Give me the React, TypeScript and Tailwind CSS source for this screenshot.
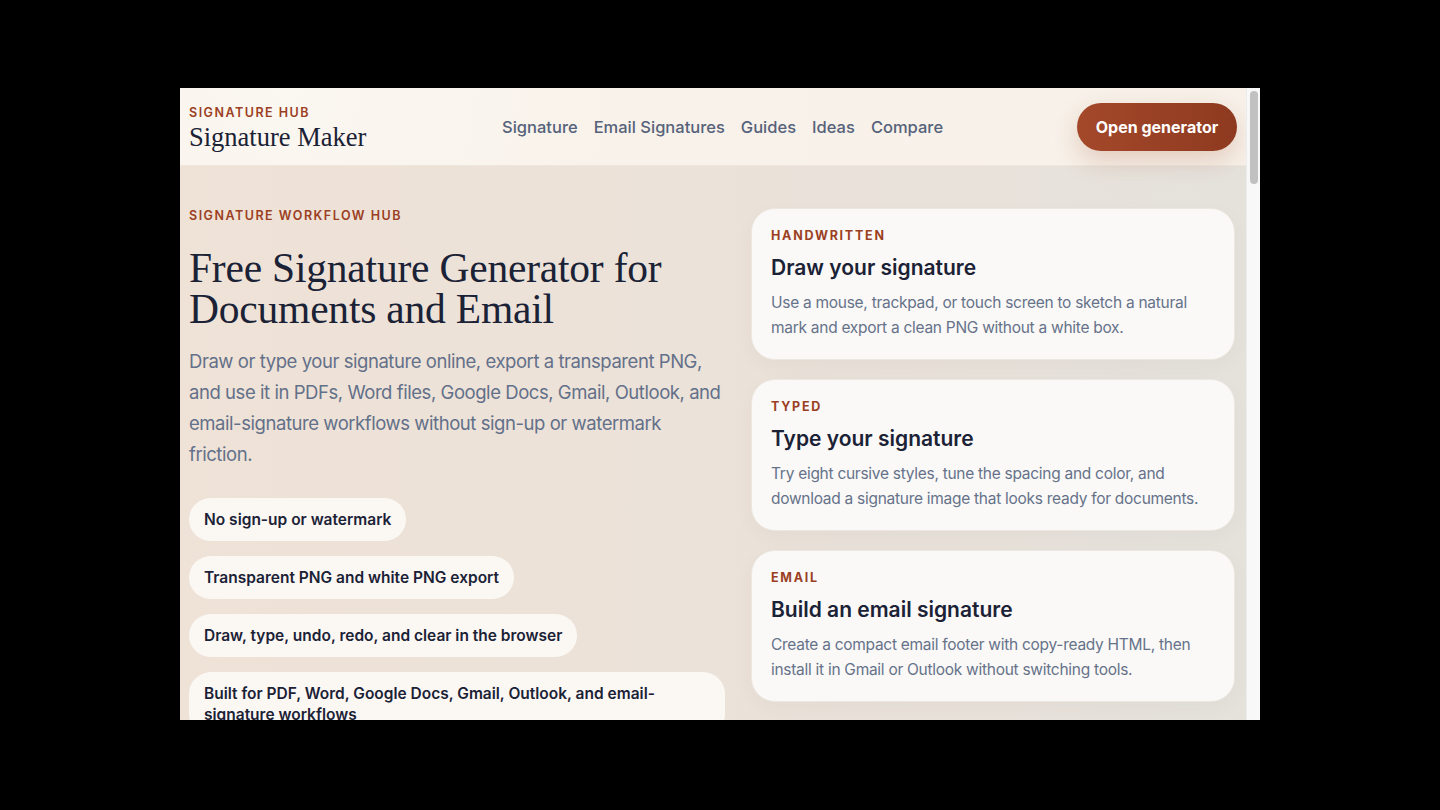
import React from 'react'

const navLinks = ['Signature', 'Email Signatures', 'Guides', 'Ideas', 'Compare']

const perks = [
  'No sign-up or watermark',
  'Transparent PNG and white PNG export',
  'Draw, type, undo, redo, and clear in the browser',
  'Built for PDF, Word, Google Docs, Gmail, Outlook, and email-signature workflows',
]

const modes = [
  {
    tag: 'HANDWRITTEN',
    title: 'Draw your signature',
    body: 'Use a mouse, trackpad, or touch screen to sketch a natural mark and export a clean PNG without a white box.',
  },
  {
    tag: 'TYPED',
    title: 'Type your signature',
    body: 'Try eight cursive styles, tune the spacing and color, and download a signature image that looks ready for documents.',
  },
  {
    tag: 'EMAIL',
    title: 'Build an email signature',
    body: 'Create a compact email footer with copy-ready HTML, then install it in Gmail or Outlook without switching tools.',
  },
]

const sans = "font-['Inter','Noto_Sans',sans-serif]"
const serif = "font-['Liberation_Serif','DejaVu_Serif',serif]"

const App = () => {
  return (
    <div className={`w-[1440px] h-[810px] bg-black pt-[88px] pl-[180px] ${sans}`}>
      <div className='w-[1080px] h-[632px] flex overflow-hidden'>
        <div className='flex-1 flex flex-col bg-gradient-to-r from-[#efe2d7] via-[#ebe2d9] to-[#e5e2dc] overflow-hidden'>
          {/* top bar */}
          <header className='h-[78px] shrink-0 flex items-center pl-[9px] pr-[9px] bg-[radial-gradient(circle_at_10%_0%,#fbf7f1_0%,#f8f2ea_35%,#f7f1e9_100%)] border-b border-[#efe7dd]'>
            <div className='w-[313px] pt-[6px]'>
              <div className='text-[12.5px] font-semibold tracking-[0.12em] text-[#9b3f23] leading-none'>SIGNATURE HUB</div>
              <div className={`${serif} text-[26.5px] text-[#1b2236] leading-[30px] mt-[2px]`}>Signature Maker</div>
            </div>
            <nav className='flex gap-[16px] text-[16.5px] font-medium text-[#56627a] pt-[2px]'>
              {navLinks.map((l) => (
                <a key={l} href='#' className='leading-none'>{l}</a>
              ))}
            </nav>
            <button className='ml-auto w-[160px] h-[48px] rounded-full bg-gradient-to-r from-[#a4482a] to-[#8e3a20] text-white text-[16px] font-bold shadow-[0_10px_24px_rgba(160,72,40,0.22)]'>
              Open generator
            </button>
          </header>

          <main className='flex gap-[26px] pl-[9px] pr-[11px] pt-[42px]'>
            <section className='w-[536px] shrink-0'>
              <div className='mt-[2px] text-[12.5px] font-semibold tracking-[0.12em] text-[#9b3f23] leading-none'>SIGNATURE WORKFLOW HUB</div>
              <h1 className={`${serif} mt-[25px] text-[41.5px] leading-[41px] text-[#1b2236] tracking-[-0.005em]`}>
                Free Signature Generator for Documents and Email
              </h1>
              <p className='mt-[16px] text-[18.5px] leading-[31.3px] tracking-[-0.024em] text-[#637089]'>
                Draw or type your signature online, export a transparent PNG, and use it in PDFs, Word files, Google Docs, Gmail, Outlook, and email-signature workflows without sign-up or watermark friction.
              </p>
              <ul className='mt-[27px] flex flex-col items-start gap-[15px]'>
                {perks.map((p) => (
                  <li key={p} className='rounded-[22px] bg-[#fbf8f4] px-[15px] py-[11px] text-[15.5px] leading-[21px] font-semibold text-[#1b2236]'>
                    {p}
                  </li>
                ))}
              </ul>
            </section>

            <section className='flex-1 flex flex-col gap-[19px]'>
              {modes.map((m) => (
                <article key={m.tag} className='h-[152px] rounded-[24px] bg-[#faf9f7] border border-[#ece7e0] px-[19px] pt-[21px] shadow-[0_6px_20px_rgba(80,60,40,0.04)]'>
                  <div className='text-[12.5px] font-bold tracking-[0.14em] text-[#9b3f23] leading-none'>{m.tag}</div>
                  <h2 className='mt-[11px] text-[21px] font-semibold text-[#1b2236] leading-[28px]'>{m.title}</h2>
                  <p className='mt-[8px] text-[15.5px] leading-[25.5px] tracking-[-0.018em] text-[#66728a]'>{m.body}</p>
                </article>
              ))}
            </section>
          </main>
        </div>

        {/* scrollbar */}
        <div className='w-[14px] shrink-0 bg-[#f8f8f8] border-l border-[#ececec] pt-[3px] flex justify-center'>
          <div className='w-[8px] h-[93px] rounded-full bg-[#c1c1c1]' />
        </div>
      </div>
    </div>
  )
}

export default App
